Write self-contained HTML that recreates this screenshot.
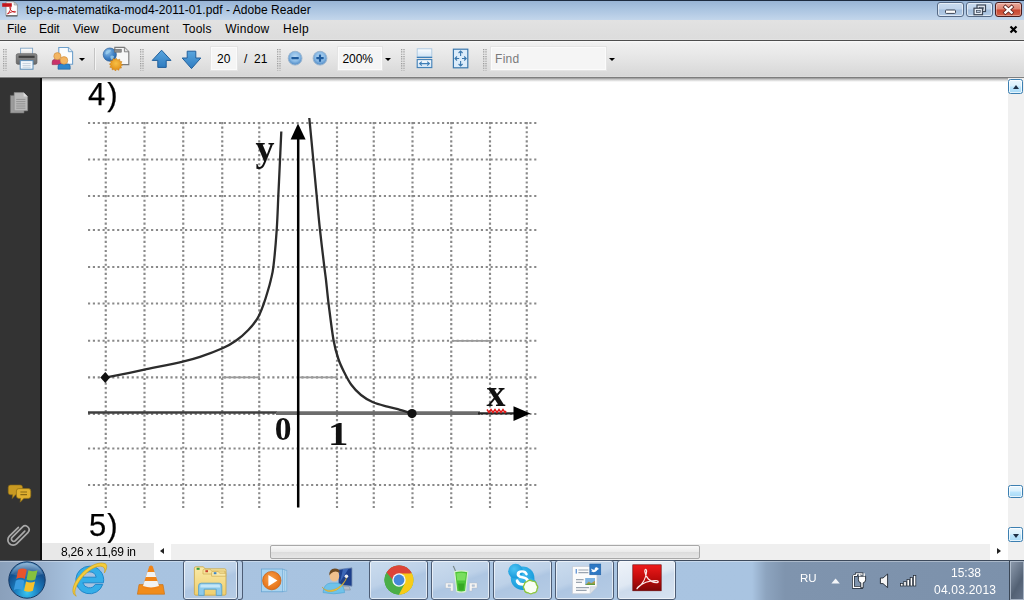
<!DOCTYPE html>
<html><head><meta charset="utf-8"><title>Adobe Reader</title>
<style>
*{box-sizing:border-box;margin:0;padding:0}
html,body{width:1024px;height:600px;overflow:hidden;background:#fff;font-family:"Liberation Sans",sans-serif;font-size:12px;color:#000}
.abs{position:absolute}
#title{left:0;top:0;width:1024px;height:20px;background:linear-gradient(#98b4d5 0,#a9c3e0 40%,#c3d6eb 100%);border-top:1px solid #1c2a3f}
#title .t{left:26px;top:2px;letter-spacing:0.06px;font-size:12px;line-height:14px;white-space:nowrap;color:#000}
#menu{left:0;top:20px;width:1024px;height:20px;background:linear-gradient(#e2e2e2,#dcdcdc)}
#menu span{position:absolute;top:2.4px;line-height:14px;font-size:12px;white-space:nowrap}
#tbline{left:0;top:39px;width:1024px;height:2px;background:linear-gradient(#e6e6e6 0,#e0e0e0 45%,#4c4c4c 55%,#505050 100%)}
#toolbar{left:0;top:41px;width:1024px;height:36px;background:linear-gradient(#fbfbfb 0,#f0f0f0 2px,#e5e5e5 50%,#d7d7d7 97%,#e0e0e0 100%)}
#tbshadow{left:0;top:77px;width:1024px;height:5px;background:linear-gradient(#6a6a6a 0,#9c9c9c 25%,#cfcfcf 55%,#f0f0f0 85%,#fff 100%)}
#side{left:0;top:78px;width:40px;height:482px;background:#333}
#sideb{left:40px;top:78px;width:2px;height:482px;background:#0c0c0c}
#vtrack{left:1008px;top:78px;width:16px;height:482px;background:#f0f0f0}
#status{left:42px;top:543px;width:112px;height:17px;background:#e8e8e8}
#status span{position:absolute;left:19px;top:2px;letter-spacing:-.2px;font-size:12px;line-height:14px;white-space:nowrap}
#htrack{left:171px;top:544px;width:819px;height:16px;background:#efefef}
#taskbar{left:0;top:560px;width:1024px;height:40px;background:linear-gradient(90deg,#8aa0bb 0,#93aac6 30px,#a8c3e0 75px,#a9c4e1 752px,#8da4bf 766px,#7f94ae 785px,#7c91ab 100%);border-top:1px solid #3d4a5c;box-shadow:inset 0 1px 0 rgba(255,255,255,.35)}

.wb{top:1px;width:27px;height:15px;border:1px solid #566a86;border-radius:3px;background:linear-gradient(#c9dbef 0,#bfd3ea 48%,#a3bedd 52%,#b4cce6 100%);box-shadow:inset 0 0 0 1px rgba(255,255,255,.55)}
.wb svg{position:absolute;left:-1px;top:-1px}
.wc{border-color:#4a1c1c;background:linear-gradient(#e9a99b 0,#dd8472 48%,#c8452f 52%,#d2634a 100%);box-shadow:inset 0 0 0 1px rgba(255,255,255,.35)}
.grip{position:absolute;top:8px;width:4px;height:21px;background-image:radial-gradient(circle at 1px 1px,#9a9a9a 0.9px,transparent 1.1px);background-size:2.5px 2.33px}
.tbox{position:absolute;top:6px;height:23px;background:#f5f5f5;border:1px solid #fbfbfb;box-shadow:0 0 0 1px #e4e4e4}
.tbox span,.ttxt{position:absolute;font-size:12px;line-height:14px;white-space:nowrap}
.dd{position:absolute;width:0;height:0;border-left:3px solid transparent;border-right:3px solid transparent;border-top:3.5px solid #000}
.sbtn{position:absolute;border:1px solid #3c7fb1;border-radius:2.5px;background:linear-gradient(#eaf6fd 0,#d9f0fc 48%,#bee6fd 52%,#a7d9f5 100%);box-shadow:inset 0 0 0 1px rgba(255,255,255,.7)}
.sbtn i,i.abs{position:absolute;width:0;height:0;display:block}
.tbtn{position:absolute;top:-1px;height:40px;border:1px solid #4d5d75;border-radius:3px;background:linear-gradient(160deg,#cbdcee 0,#bdd1e8 45%,#aec6e2 55%,#b6cce5 100%);box-shadow:inset 0 0 0 1px rgba(255,255,255,.6)}
.tbtn.act{background:linear-gradient(160deg,#eef3f9 0,#dfe8f3 45%,#cddbec 55%,#d6e2f0 100%)}
.tt{color:#fff;font-size:12px;line-height:14px;white-space:nowrap}
#graph,.doc{will-change:transform}
.doc{font-size:31px;line-height:30px;white-space:nowrap;letter-spacing:2px;-webkit-text-stroke:0.25px #000}
</style></head><body>
<div id="title" class="abs"><span class="abs t">tep-e-matematika-mod4-2011-01.pdf - Adobe Reader</span>
<svg class="abs" style="left:0;top:-1px" width="24" height="19" viewBox="0 0 24 19">
<path d="M6,1.8 h8.2 l3.2,3.2 v10.8 h-11.4z" fill="#fdfdfd" stroke="#8a8a8a" stroke-width="0.8"/>
<path d="M14.2,1.8 v3.2 h3.2z" fill="#d8d8d8" stroke="#8a8a8a" stroke-width="0.6"/>
<path d="M6,15.9 h11.4" stroke="#444" stroke-width="1"/>
<rect x="2.2" y="3.2" width="9.6" height="3.6" fill="#c4161c"/>
<path d="M7.5,14 c2.2,-2.2 3.4,-5 3.2,-6.6 c-0.2,-0.9 -1.1,-0.6 -0.9,0.5 c0.4,2.2 2.6,4.2 5,4.4 c1.1,0.1 1.1,-0.9 0,-0.9 c-2.4,0 -5.2,1.1 -7.3,2.6z" fill="none" stroke="#c4161c" stroke-width="0.9"/>
</svg>
<div class="abs wb" style="left:937px"><svg width="27" height="15" viewBox="0 0 27 15"><rect x="8.5" y="8" width="10" height="3.4" rx="0.8" fill="#fff" stroke="#3c4656" stroke-width="1"/></svg></div>
<div class="abs wb" style="left:966px"><svg width="27" height="15" viewBox="0 0 27 15"><rect x="11" y="3" width="8.5" height="6.5" fill="#e8eef6" stroke="#3c4656" stroke-width="1.2"/><rect x="13.3" y="5.2" width="4" height="2" fill="#b9cbe0" stroke="#3c4656" stroke-width="0.6"/><rect x="8" y="6.2" width="8.5" height="6.5" fill="#e8eef6" stroke="#3c4656" stroke-width="1.2"/><rect x="10.4" y="8.6" width="3.8" height="2" fill="#b9cbe0" stroke="#3c4656" stroke-width="0.7"/></svg></div>
<div class="abs wb wc" style="left:995px"><svg width="27" height="15" viewBox="0 0 27 15"><path d="M10.4,5 L16.6,10.6 M16.6,5 L10.4,10.6" stroke="#5a2320" stroke-width="3.8" stroke-linecap="square"/><path d="M10.4,5 L16.6,10.6 M16.6,5 L10.4,10.6" stroke="#fff" stroke-width="2.3" stroke-linecap="square"/></svg></div>
</div>
<div id="menu" class="abs">
<span style="left:7px">File</span><span style="left:39px">Edit</span><span style="left:73px">View</span><span style="left:112px;letter-spacing:.33px">Document</span><span style="left:182.5px;letter-spacing:.25px">Tools</span><span style="left:225.3px;letter-spacing:.25px">Window</span><span style="left:283px;letter-spacing:.3px">Help</span><svg class="abs" style="left:1009px;top:5px" width="9" height="9" viewBox="0 0 9 9"><path d="M1.5,1.5 L7.5,7.5 M7.5,1.5 L1.5,7.5" stroke="#000" stroke-width="2.2"/></svg>
</div>
<div id="tbline" class="abs"></div>
<div id="toolbar" class="abs">
<svg class="abs" style="left:3px;top:8px" width="4" height="22" viewBox="0 0 4 22"><path d="M0.7,0v21.5M3,0v21.5" stroke="#969696" stroke-width="1.2" stroke-dasharray="1.165 1.165"/></svg>
<svg class="abs" style="left:14px;top:5px" width="26" height="26" viewBox="14 46 26 26">
<defs><linearGradient id="pg" x1="0" y1="0" x2="0" y2="1"><stop offset="0" stop-color="#fff"/><stop offset="1" stop-color="#d6d6d6"/></linearGradient>
<linearGradient id="pb" x1="0" y1="0" x2="0" y2="1"><stop offset="0" stop-color="#8d8d8d"/><stop offset="1" stop-color="#6a6a6a"/></linearGradient></defs>
<rect x="20.6" y="48.2" width="12" height="8" fill="url(#pg)" stroke="#7fa3c4" stroke-width="0.9"/>
<rect x="16.3" y="53.8" width="20.6" height="10.4" rx="1.6" fill="url(#pb)" stroke="#5e5e5e" stroke-width="0.8"/>
<rect x="18.6" y="55.7" width="16" height="2.2" fill="#3e3e3e"/>
<rect x="20.2" y="60.6" width="12.8" height="8.6" fill="#f4f9fd" stroke="#5b8db8" stroke-width="1"/>
<path d="M22.5,63.4h8.2M22.5,65.4h8.2M22.5,67.2h8.2" stroke="#b9c7d3" stroke-width="0.8"/>
</svg>
<svg class="abs" style="left:50px;top:5px" width="26" height="26" viewBox="50 46 26 26">
<path d="M58.8,47.5 h9.6 l4.2,4.2 v12.6 h-13.8z" fill="#fafcfe" stroke="#6d9fcb" stroke-width="1.1"/>
<path d="M68.4,47.5 v4.2 h4.2" fill="#dfeaf5" stroke="#6d9fcb" stroke-width="0.9"/>
<path d="M52.2,64.6 v-2.6 q0,-2.6 2.6,-2.6 h4 q2.6,0 2.6,2.6 v2.6z" fill="#c9326a" stroke="#8e1f48" stroke-width="0.6"/>
<circle cx="57.4" cy="56.2" r="3.6" fill="#f3b562" stroke="#c98a3a" stroke-width="0.6"/>
<path d="M58,69.2 v-2.8 q0,-2.4 2.6,-2.4 h7 q2.6,0 2.6,2.4 v2.8z" fill="#2f86cc" stroke="#1c5d99" stroke-width="0.6"/>
<circle cx="64" cy="60.4" r="3.8" fill="#f3b562" stroke="#c98a3a" stroke-width="0.6"/>
</svg>
<div class="dd" style="left:79px;top:16.5px"></div>
<div class="abs" style="left:94px;top:7px;width:1px;height:22px;background:#c4c4c4;box-shadow:1px 0 0 #f4f4f4"></div>
<svg class="abs" style="left:102px;top:4px" width="30" height="28" viewBox="102 45 30 28">
<defs><radialGradient id="gl" cx="0.35" cy="0.3" r="0.8"><stop offset="0" stop-color="#8fc0ea"/><stop offset="0.6" stop-color="#3d7fc4"/><stop offset="1" stop-color="#285f9f"/></radialGradient>
<radialGradient id="sb" cx="0.5" cy="0.4" r="0.6"><stop offset="0" stop-color="#f7c046"/><stop offset="1" stop-color="#e08a12"/></radialGradient></defs>
<path d="M114.8,47.4 h9.6 l4.4,4.4 v12.8 h-14z" fill="#f7f7f7" stroke="#7a7a7a" stroke-width="1.1"/>
<path d="M124.4,47.4 v4.4 h4.4" fill="#e2e2e2" stroke="#7a7a7a" stroke-width="0.9"/>
<circle cx="109.8" cy="54.6" r="6.6" fill="url(#gl)" stroke="#2a5f9a" stroke-width="0.7"/>
<path d="M106,51.5 q2.5,-2.5 5,-1.2 q-0.5,2.5 -2.6,3 q-1.8,2 -3,0.4z M110.5,56 q2,-1 3.6,0.6 q-0.6,2.6 -2.6,3.2 q-1.6,-1.6 -1,-3.8z" fill="#9ed0ee" opacity="0.8"/>
<rect x="114.4" y="49.2" width="7" height="3" fill="#8c8c8c" stroke="#666" stroke-width="0.5"/>
<path d="M116.4,58 l1.6,2 l2.4,-1 l0.2,2.6 l2.6,0.4 l-1.2,2.4 l2,1.6 l-2.2,1.4 l0.8,2.4 l-2.6,0.2 l-0.6,2.6 l-2.4,-1.2 l-1.8,2 l-1.6,-2.2 l-2.4,0.8 l-0.2,-2.6 l-2.6,-0.6 l1.2,-2.2 l-1.8,-1.8 l2.2,-1.4 l-0.8,-2.4 l2.6,-0.2 l0.6,-2.6 l2.4,1z" transform="translate(116.4 64.6) scale(0.82) translate(-116.4 -65.6)" fill="url(#sb)" stroke="#c87a10" stroke-width="0.6"/>
</svg>
<svg class="abs" style="left:140px;top:8px" width="4" height="22" viewBox="0 0 4 22"><path d="M0.7,0v21.5M3,0v21.5" stroke="#969696" stroke-width="1.2" stroke-dasharray="1.165 1.165"/></svg>
<svg class="abs" style="left:149px;top:6px" width="56" height="24" viewBox="149 47 56 24">
<defs><linearGradient id="ar" x1="0" y1="0" x2="0" y2="1"><stop offset="0" stop-color="#5aa6de"/><stop offset="1" stop-color="#2f7cc0"/></linearGradient></defs>
<path d="M161.6,50.2 L171,60.4 H166.2 V67.4 H157.8 V60.4 H152.2z" fill="url(#ar)" stroke="#215f9b" stroke-width="1" stroke-linejoin="round"/>
<path d="M187.2,51.2 H195.8 V58 H200.8 L191.5,68.6 L182.2,58 H187.2z" fill="url(#ar)" stroke="#215f9b" stroke-width="1" stroke-linejoin="round"/>
</svg>
<div class="tbox" style="left:211px;width:26px"><span style="left:5px;top:3.5px">20</span></div>
<span class="ttxt" style="left:244px;top:10.5px">/</span><span class="ttxt" style="left:254px;top:10.5px">21</span>
<svg class="abs" style="left:277px;top:8px" width="4" height="22" viewBox="0 0 4 22"><path d="M0.7,0v21.5M3,0v21.5" stroke="#969696" stroke-width="1.2" stroke-dasharray="1.165 1.165"/></svg>
<svg class="abs" style="left:286px;top:8px" width="44" height="20" viewBox="286 49 44 20">
<defs><radialGradient id="zb" cx="0.5" cy="0.4" r="0.6"><stop offset="0" stop-color="#b9d9f3"/><stop offset="0.55" stop-color="#8bbbe6"/><stop offset="1" stop-color="#4a86c3"/></radialGradient></defs>
<circle cx="295.1" cy="58.2" r="6.9" fill="url(#zb)" stroke="#9db7d0" stroke-width="1"/>
<rect x="291.4" y="57" width="7.4" height="2.2" rx="0.6" fill="#1f5c9e"/>
<circle cx="320" cy="58.2" r="6.9" fill="url(#zb)" stroke="#9db7d0" stroke-width="1"/>
<rect x="316.3" y="57" width="7.4" height="2.2" rx="0.6" fill="#1f5c9e"/><rect x="318.9" y="54.4" width="2.2" height="7.4" rx="0.6" fill="#1f5c9e"/>
</svg>
<div class="tbox" style="left:338px;width:44px"><span style="left:3.5px;top:3.5px;letter-spacing:-.1px">200%</span></div>
<div class="dd" style="left:384.5px;top:17px"></div>
<svg class="abs" style="left:401px;top:8px" width="4" height="22" viewBox="0 0 4 22"><path d="M0.7,0v21.5M3,0v21.5" stroke="#969696" stroke-width="1.2" stroke-dasharray="1.165 1.165"/></svg>
<svg class="abs" style="left:414px;top:5px" width="60" height="26" viewBox="414 46 60 26">
<defs><linearGradient id="fw" x1="0" y1="0" x2="0" y2="1"><stop offset="0" stop-color="#fafcfe"/><stop offset="1" stop-color="#cfe3f5"/></linearGradient></defs>
<rect x="417.2" y="48.8" width="14.6" height="8.4" fill="url(#fw)" stroke="#a9c6e0" stroke-width="0.9"/>
<path d="M416.8,57.4 h15.4" stroke="#3f7fb7" stroke-width="1.3"/>
<rect x="417.2" y="59.6" width="14.6" height="8" fill="url(#fw)" stroke="#3f7fb7" stroke-width="1.1"/>
<path d="M419.6,63.6 h9.8 M421.8,61.6 l-2.2,2 l2.2,2 M427.2,61.6 l2.2,2 l-2.2,2" stroke="#3f7fb7" stroke-width="1.1" fill="none"/>
<rect x="453.4" y="49.2" width="14.4" height="18.6" fill="#dcecfa" stroke="#3b78ad" stroke-width="1.2"/>
<path d="M460.6,51 v5 M458.6,53 l2,-2 l2,2 M460.6,66 v-5 M458.6,64 l2,2 l2,-2 M455,58.5 h4.2 M457,56.5 l-2,2 l2,2 M466.2,58.5 h-4.2 M464.2,56.5 l2,2 l-2,2" stroke="#3b78ad" stroke-width="1.1" fill="none"/>
</svg>
<svg class="abs" style="left:483px;top:8px" width="4" height="22" viewBox="0 0 4 22"><path d="M0.7,0v21.5M3,0v21.5" stroke="#969696" stroke-width="1.2" stroke-dasharray="1.165 1.165"/></svg>
<div class="tbox" style="left:491px;width:115px"><span style="left:3px;top:3.5px;color:#7a7a7a;letter-spacing:.3px">Find</span></div>
<div class="dd" style="left:608.5px;top:16.5px"></div>
</div>
<div id="tbshadow" class="abs"></div>
<div id="side" class="abs">
<svg class="abs" style="left:0;top:0" width="40" height="482" viewBox="0 78 40 482">
<path d="M10.4,95.4 h9.6 l4,4 v13.6 h-13.6z" fill="#9c9c9c" stroke="#6e6e6e" stroke-width="0.6"/>
<path d="M14.2,92.6 h9.4 l4,4 v14.2 h-13.4z" fill="#b9b9b9" stroke="#8a8a8a" stroke-width="0.6"/>
<path d="M23.6,92.6 v4 h4z" fill="#dcdcdc"/>
<path d="M16.2,99.4h9.2M16.2,101.6h9.2M16.2,103.8h9.2M16.2,106h9.2M16.2,108.2h9.2" stroke="#8e8e8e" stroke-width="0.9"/>
<path d="M10.6,485 h9.6 q2.4,0 2.4,2.4 v5 q0,2.4 -2.4,2.4 h-4.6 l-3.4,3.8 l0.4,-3.8 h-2 q-2.4,0 -2.4,-2.4 v-5 q0,-2.4 2.4,-2.4z" fill="#c99a22" stroke="#8a6a14" stroke-width="0.6"/>
<path d="M18.8,488.6 h9.6 q2.4,0 2.4,2.4 v5 q0,2.4 -2.4,2.4 h-4.6 l-3.6,3.8 l0.4,-3.8 h-1.8 q-2.4,0 -2.4,-2.4 v-5 q0,-2.4 2.4,-2.4z" fill="#e0b030" stroke="#8a6a14" stroke-width="0.7"/>
<path d="M20.4,492h6.6M20.4,494.6h6.6" stroke="#8a6a14" stroke-width="1.1"/>
<path d="M24.8,531.2 L15.4,540.6 a2.3,2.3 0 0 1 -3.3,-3.3 L22.6,526.8 a3.9,3.9 0 0 1 5.5,5.5 L16.8,543.6 a5.2,5.2 0 0 1 -7.4,-7.4 L18.4,527.4" fill="none" stroke="#a9a9a9" stroke-width="1.7" stroke-linecap="round"/>
</svg></div><div id="sideb" class="abs"></div>
<div id="vtrack" class="abs">
<div class="sbtn" style="left:0;top:1px;width:15px;height:15px"><i style="left:3.5px;top:5px;border-left:3.5px solid transparent;border-right:3.5px solid transparent;border-bottom:4px solid #1e2f45"></i></div>
<div class="sbtn" style="left:0;top:407px;width:15px;height:13px"></div>
<div class="sbtn" style="left:0;top:449px;width:15px;height:15px"><i style="left:3.5px;top:5.5px;border-left:3.5px solid transparent;border-right:3.5px solid transparent;border-top:4px solid #1e2f45"></i></div>
</div>
<svg class="abs" id="graph" style="left:0;top:0" width="1024" height="560" viewBox="0 0 1024 560">
<g stroke="#898989" stroke-width="2.15" fill="none">
<line x1="88" y1="123.0" x2="536.5" y2="123.0" stroke-dasharray="2.15 2.7"/>
<line x1="88" y1="159.5" x2="536.5" y2="159.5" stroke-dasharray="2.15 2.7"/>
<line x1="88" y1="196.0" x2="536.5" y2="196.0" stroke-dasharray="2.15 2.7"/>
<line x1="88" y1="230.0" x2="536.5" y2="230.0" stroke-dasharray="2.15 2.7"/>
<line x1="88" y1="267.0" x2="536.5" y2="267.0" stroke-dasharray="2.15 2.7"/>
<line x1="88" y1="303.5" x2="536.5" y2="303.5" stroke-dasharray="2.15 2.7"/>
<line x1="88" y1="340.7" x2="536.5" y2="340.7" stroke-dasharray="2.15 2.7"/>
<line x1="88" y1="377.3" x2="536.5" y2="377.3" stroke-dasharray="2.15 2.7"/>
<line x1="88" y1="448.5" x2="536.5" y2="448.5" stroke-dasharray="2.15 2.7"/>
<line x1="88" y1="485.0" x2="536.5" y2="485.0" stroke-dasharray="2.15 2.7"/>
<line x1="105.75" y1="122" x2="105.75" y2="508" stroke-dasharray="2.15 2.42"/>
<line x1="144.50" y1="122" x2="144.50" y2="508" stroke-dasharray="2.15 2.42"/>
<line x1="183.25" y1="122" x2="183.25" y2="508" stroke-dasharray="2.15 2.42"/>
<line x1="222.25" y1="122" x2="222.25" y2="508" stroke-dasharray="2.15 2.42"/>
<line x1="259.25" y1="122" x2="259.25" y2="508" stroke-dasharray="2.15 2.42"/>
<line x1="337.00" y1="122" x2="337.00" y2="508" stroke-dasharray="2.15 2.42"/>
<line x1="373.75" y1="122" x2="373.75" y2="508" stroke-dasharray="2.15 2.42"/>
<line x1="412.50" y1="122" x2="412.50" y2="508" stroke-dasharray="2.15 2.42"/>
<line x1="451.25" y1="122" x2="451.25" y2="508" stroke-dasharray="2.15 2.42"/>
<line x1="490.00" y1="122" x2="490.00" y2="508" stroke-dasharray="2.15 2.42"/>
<line x1="526.75" y1="122" x2="526.75" y2="508" stroke-dasharray="2.15 2.42"/>
</g>
<path d="M222,377.4H259M299.5,377.4H337" stroke="#9a9a9a" stroke-width="1.8"/>
<line x1="452" y1="340.8" x2="491" y2="340.8" stroke="#9a9a9a" stroke-width="1.8"/>
<line x1="88" y1="414" x2="536.5" y2="414" stroke="#898989" stroke-width="2.15" stroke-dasharray="2.15 2.7"/>
<line x1="88" y1="412.5" x2="277" y2="412.5" stroke="#3e3e3e" stroke-width="2.3"/>
<line x1="276" y1="413.2" x2="480" y2="413.2" stroke="#6c6c6c" stroke-width="3.7"/>
<line x1="478" y1="413.4" x2="516" y2="413.4" stroke="#262626" stroke-width="2.4"/>
<polygon points="530.5,413.6 513.5,406.3 513.5,421" fill="#000"/>
<line x1="298.2" y1="130" x2="298.2" y2="507.5" stroke="#000" stroke-width="2.5"/>
<polygon points="298,123.5 290.6,139.5 305.6,139.5" fill="#000"/>
<path d="M105.1,377.7 C111.6,376.4 131.4,372.4 144.3,369.7 C157.2,367.0 173.5,363.7 182.8,361.6 C192.1,359.5 193.4,359.1 200.0,356.9 C206.6,354.7 216.5,351.0 222.5,348.3 C228.5,345.6 231.5,343.9 235.8,340.8 C240.1,337.8 244.7,333.8 248.3,330.0 C251.9,326.2 255.0,322.5 257.5,318.3 C260.0,314.1 261.6,309.6 263.3,305.0 C265.0,300.4 266.6,295.2 267.8,291.0 C269.1,286.8 269.9,284.1 270.8,280.0 C271.7,275.9 272.4,275.0 273.4,266.7 C274.4,258.4 275.9,241.8 276.7,230.0 C277.5,218.2 277.8,207.7 278.3,196.0 C278.9,184.3 279.5,170.8 280.0,160.0 C280.5,149.2 281.1,136.2 281.3,131.5" stroke="#2c2c2c" stroke-width="2.3" fill="none"/>
<path d="M309.3,118.0 C310.0,125.0 312.1,147.0 313.3,160.0 C314.5,173.0 315.6,184.3 316.7,196.0 C317.8,207.7 318.7,218.2 320.0,230.0 C321.3,241.8 323.3,258.4 324.3,266.7 C325.3,275.0 325.3,273.8 326.0,280.0 C326.7,286.2 327.4,294.0 328.6,304.0 C329.9,314.0 331.9,330.8 333.5,340.0 C335.1,349.2 336.5,353.5 338.4,359.0 C340.2,364.5 342.4,368.7 344.6,373.0 C346.8,377.3 348.8,381.3 351.5,385.0 C354.2,388.7 357.4,392.1 361.0,395.0 C364.6,397.9 368.6,400.4 373.0,402.3 C377.4,404.2 383.0,405.4 387.5,406.6 C392.0,407.9 396.0,408.7 400.0,409.8 C404.0,410.9 409.6,412.7 411.5,413.3" stroke="#2c2c2c" stroke-width="2.3" fill="none"/>
<polygon points="105.3,372 110,377.6 105.3,383 100.3,377.6" fill="#111"/>
<circle cx="412" cy="413.6" r="4.6" fill="#111"/>
<g font-family="'Liberation Serif',serif" font-weight="bold" fill="#111">
<text x="255.5" y="160.5" font-size="38">y</text>
<text x="486.5" y="406" font-size="38">x</text>
<text x="274.8" y="440.4" font-size="33.5">0</text>
<text x="329.8" y="444.8" font-size="34" transform="translate(338.5 0) scale(1.2 1) translate(-338.5 0)">1</text>
</g>
<path d="M487,409.5 l2,3 l2,-3 l2,3 l2,-3 l2,3 l2,-3 l2,3 l2,-3 l2,3 l1,-1.5" stroke="#e01818" stroke-width="1.5" fill="none"/>
</svg>
<div class="abs doc" style="left:87.8px;top:80.3px">4)</div>
<div class="abs doc" style="left:88.6px;top:510.5px;letter-spacing:1px">5)</div>
<div id="status" class="abs"><span>8,26 x 11,69 in</span></div>
<i class="abs" style="left:160px;top:548px;border-top:3.5px solid transparent;border-bottom:3.5px solid transparent;border-right:4px solid #222"></i>
<div id="htrack" class="abs"><div class="abs" style="left:99px;top:1px;width:430px;height:14px;border:1px solid #a8a8a8;border-radius:2px;background:linear-gradient(#f8f8f8,#eaeaea 50%,#dcdcdc 52%,#e6e6e6)"></div></div>
<i class="abs" style="left:997px;top:548px;border-top:3.5px solid transparent;border-bottom:3.5px solid transparent;border-left:4px solid #222"></i>
<div id="taskbar" class="abs">
<div class="tbtn" style="left:183px;width:55px"></div><div class="abs" style="left:238px;top:-1px;width:5px;height:40px;border:1px solid #4d5d75;border-left:none;border-radius:0 3px 3px 0;background:#b9cee6"></div>
<div class="tbtn" style="left:369px;width:59px"></div>
<div class="tbtn" style="left:431px;width:59px"></div>
<div class="tbtn" style="left:493px;width:59px"></div>
<div class="tbtn" style="left:555px;width:59px"></div>
<div class="tbtn act" style="left:617px;width:59px"></div>
<svg class="abs" style="left:0;top:0" width="1024" height="39" viewBox="0 561 1024 39">
<defs>
<radialGradient id="orb" cx="0.5" cy="0.85" r="0.9"><stop offset="0" stop-color="#39c5f0"/><stop offset="0.35" stop-color="#1b7fc0"/><stop offset="0.7" stop-color="#134e8c"/><stop offset="1" stop-color="#5a9ed0"/></radialGradient>
<linearGradient id="orbh" x1="0" y1="0" x2="0" y2="1"><stop offset="0" stop-color="#fff" stop-opacity="0.75"/><stop offset="1" stop-color="#fff" stop-opacity="0.1"/></linearGradient>
<linearGradient id="fold" x1="0" y1="0" x2="0" y2="1"><stop offset="0" stop-color="#f9e9a8"/><stop offset="1" stop-color="#efcf6e"/></linearGradient>
<linearGradient id="acr" x1="0" y1="0" x2="0" y2="1"><stop offset="0" stop-color="#ee1a1a"/><stop offset="0.5" stop-color="#c20c0c"/><stop offset="1" stop-color="#7e0606"/></linearGradient>
<radialGradient id="wmp" cx="0.45" cy="0.4" r="0.65"><stop offset="0" stop-color="#f9a24a"/><stop offset="1" stop-color="#e26a10"/></radialGradient>
<radialGradient id="sky" cx="0.4" cy="0.35" r="0.75"><stop offset="0" stop-color="#4cc3f4"/><stop offset="1" stop-color="#0e93d6"/></radialGradient>
</defs>
<!-- start orb -->
<circle cx="27" cy="580" r="18.2" fill="url(#orb)" stroke="#163a66" stroke-width="1"/>
<path d="M11,574 a17,17 0 0 1 32,0 q-16,6 -32,0z" fill="url(#orbh)" opacity="0.55"/>
<g transform="translate(27 580) scale(1.22) translate(-26.2 -580)"><path d="M19,571.5 q3.5,-2 7,0 l-1.6,7.6 q-3.5,-1.8 -7,0z" fill="#e8542c"/>
<path d="M27.4,572 q3.6,1.8 7.4,0 l-1.8,7.6 q-3.6,1.8 -7.2,0z" fill="#86c13e"/>
<path d="M17,580.6 q3.5,-2 7,0 l-1.6,7.6 q-3.5,-1.8 -7,0z" fill="#3b9ce0"/>
<path d="M25.4,581.2 q3.6,1.8 7.4,0 l-1.8,7.6 q-3.6,1.8 -7.2,0z" fill="#f6c12c"/></g>
<!-- IE -->
<g transform="translate(89.6 580) scale(1.17) translate(-89.6 -580)"><path d="M89.6,568.2 a11.8,11.8 0 1 0 11.2,15.6 h-6.4 a5.8,5.8 0 0 1 -10.6,-1.4 h17.6 a11.8,11.8 0 0 0 -11.8,-14.2z M83.8,577.6 a5.8,5.6 0 0 1 11.4,0z" fill="#35aee8" stroke="#1c84c8" stroke-width="0.8" fill-rule="evenodd"/>
<path d="M103.2,566.2 c-6.5,-2.8 -18,3.5 -24.6,13.6 c-4.4,7 -4.2,12.6 -0.4,14 c-2.4,-2.6 -1,-7.4 2.6,-12.8 c5.8,-8.6 15.2,-14.6 20,-12.4 c2,0.9 2.2,3.2 1.4,5.4 c2,-3.2 2.8,-6.6 1,-7.8z" fill="#f4cc3c" stroke="#cda11c" stroke-width="0.6"/></g>
<!-- VLC -->
<path d="M139,584.6 h24 l1.6,9.6 h-27.2z" fill="#f08c1c" stroke="#c96c0c" stroke-width="0.6"/>
<path d="M149.2,566.4 q1.8,-1.6 3.6,0 l6.8,21.2 q-8.6,4 -17.2,0z" fill="#f08418"/>
<path d="M147.4,572 h7.2 l1.6,5 h-10.4z M144.6,581 h12.8 l1.6,5 q-8,2.8 -16,0z" fill="#f2f2f2"/>
<!-- Explorer -->
<path d="M194.4,568.2 q0,-1.4 1.4,-1.4 h7.6 l1.6,2 h19.6 q1.4,0 1.4,1.4 v23.6 q0,1.4 -1.4,1.4 h-28.8 q-1.4,0 -1.4,-1.4z" fill="url(#fold)" stroke="#c9a545" stroke-width="0.8"/>
<path d="M203,570.4 q0,-1.2 1.2,-1.2 h6 l1.4,1.8 h13.4 v3 h-22z" fill="#f6e29a" stroke="#c9a545" stroke-width="0.6"/>
<path d="M211.6,572.6 q0,-1.2 1.2,-1.2 h5.4 l1.4,1.8 h6.2 v3 h-14.2z" fill="#f8e8a8" stroke="#c9a545" stroke-width="0.6"/>
<rect x="196.6" y="567.8" width="3" height="2" fill="#2f9a3a"/><rect x="205.4" y="570.2" width="2.6" height="2" fill="#c8402c"/><rect x="213.8" y="572.2" width="2.6" height="2" fill="#3b84c8"/>
<path d="M198.6,595.4 v-9.6 q0,-2.6 2.6,-2.6 h18 q2.6,0 2.6,2.6 v9.6 h-5.6 v-6.2 h-12 v6.2z" fill="#8ccaec" stroke="#4f9ccc" stroke-width="0.8"/>
<path d="M200.4,586 q0,-1.4 1.6,-1.4 h16.6 q1.4,0 1.4,1.4 v1.4 h-19.6z" fill="#c4e6f8"/>
<!-- WMP -->
<rect x="265.4" y="570.2" width="21.4" height="21" fill="#b9ddf4" stroke="#78b0d8" stroke-width="0.7"/>
<rect x="263.4" y="569.6" width="21.4" height="21.8" fill="#c4e2f6" stroke="#78b0d8" stroke-width="0.7"/>
<rect x="261.4" y="569" width="21.4" height="22.8" fill="#a9d4f0" stroke="#6aa6d2" stroke-width="0.8"/>
<circle cx="271.8" cy="580.6" r="9.2" fill="url(#wmp)" stroke="#c85c0c" stroke-width="0.7"/>
<path d="M268.4,575 l9,5.6 l-9,5.6z" fill="#fff"/>
<!-- user + monitor -->
<path d="M338.6,569.4 l13.4,-1.6 v18.4 l-13.4,-1.4z" fill="#1d3f8c" stroke="#7f95b4" stroke-width="0.8"/>
<path d="M343,569 l6,-1 l-9,14z" fill="#4a78c8" opacity="0.7"/>
<path d="M341,586.4 h8 l1.4,3.6 h-10.8z" fill="#b4bcc6" stroke="#7f8a98" stroke-width="0.5"/>
<ellipse cx="334.4" cy="576" rx="4.8" ry="5.6" fill="#f0c08c"/>
<path d="M329.4,575.6 q-0.6,-6.6 5.4,-7 q5,0 5,4.4 q-3.4,-2.4 -6.6,-1 q-2.6,1.2 -3.8,3.6z" fill="#6e4a22"/>
<path d="M323,592.6 q0.6,-8.6 7.4,-9.6 h7.6 q6,1.4 6.6,9.6 q-10.8,2.4 -21.6,0z" fill="#6fc2ea" stroke="#3f9ccc" stroke-width="0.5"/>
<path d="M322,587 q4,5 12,2.6 q8.6,-3 13.4,-13.6 q-2.6,9 -10.6,14 q-9.6,4.6 -14.8,-3z" fill="#f0c43c" stroke="#c89a1c" stroke-width="0.4"/>
<circle cx="346.4" cy="576.2" r="1.8" fill="#fff" opacity="0.9"/>
<!-- Chrome -->
<circle cx="399" cy="580" r="14.4" fill="#4aae48"/>
<path d="M399,580 L386.53,572.8 A14.4,14.4 0 0 1 411.47,572.8z" fill="#dc4437"/>
<path d="M399,580 L411.47,572.8 A14.4,14.4 0 0 1 399,594.4z" fill="#f7cb18"/>
<path d="M399,580 L386.53,572.8 A14.4,14.4 0 0 0 399,594.4z" fill="#4aae48"/>
<path d="M399,573.4 h12.8 a14.4,14.4 0 0 0 -25.2,-0.8 l6.4,7.4z" fill="#dc4437"/>
<path d="M404.8,583.4 l-5.8,11 a14.4,14.4 0 0 0 12.8,-21 h-12.8z" fill="#f7cb18"/>
<path d="M393.2,583.4 l-6.6,-10.8 a14.4,14.4 0 0 0 12.4,21.8 l5.8,-11z" fill="#4aae48"/>
<circle cx="399" cy="580" r="6.7" fill="#f4f8fb"/>
<circle cx="399" cy="580" r="5.4" fill="#4688d8"/>
<!-- QIP -->
<path d="M454,567.4 l1.6,4 M453.2,566 l0.8,1.4" stroke="#7a8a8a" stroke-width="1.2"/>
<path d="M454.6,571.8 q6.6,-2 13.2,0 l-2.2,19.6 q-4.4,1.6 -8.8,0z" fill="#4cc436" stroke="#d8f0d0" stroke-width="1.2"/>
<path d="M456.4,573.4 q4.8,-1.2 9.6,0 l-0.8,7 h-8z" fill="#7ade5e"/>
<path d="M458,583.4 h6.4 l-0.8,7 h-4.8z" fill="#38a824"/>
<path d="M445.6,583 h7.6 v8 h-2.6 v-3 h-5z M448,584.8 v1.6 h2.6 v-1.6z" fill="#f4f4f4" stroke="#b0b8c0" stroke-width="0.4" fill-rule="evenodd"/>
<path d="M469.4,583 h7.6 v5 h-5 v3 h-2.6z M472,584.8 v1.6 h2.6 v-1.6z" fill="#f4f4f4" stroke="#b0b8c0" stroke-width="0.4" fill-rule="evenodd"/>
<!-- Skype -->
<g fill="url(#sky)"><circle cx="522.6" cy="578.2" r="11.8"/><circle cx="515.6" cy="571.2" r="7.4"/><circle cx="529.6" cy="585.2" r="7.4"/></g>
<path d="M527.6,573.6 q-1.200,-3.400 -5.600,-3.400 q-5.400,0 -5.400,4 q0,3 4.400,4 l3,0.800 q2,0.600 2,2 q0,2 -3.400,2 q-3,0 -4,-2.600 q-0.800,-1.600 -2.200,-0.800 q-1.200,0.800 -0.400,2.600 q1.600,3.600 6.800,3.600 q6.200,0 6.200,-4.800 q0,-3.200 -4.600,-4.400 l-3,-0.800 q-1.800,-0.400 -1.800,-1.600 q0,-1.600 2.600,-1.600 q2.200,0 3,1.800 q0.800,1.600 2,0.900 q1,-0.600 0.400,-1.700z" fill="#fff"/>
<path d="M527,581.600 q2.600,-2.400 5.400,-0.400 q3.600,-0.200 4,3.200 q2.400,2.200 0.600,4.800 q0,3.400 -3.600,3.600 q-2.600,2 -5.200,0 q-3.600,0 -3.800,-3.400 q-2,-2.600 0,-5 q0.200,-2.600 2.600,-2.800z" fill="#fafff4" stroke="#8cc63c" stroke-width="1.3"/>
<!-- doc -->
<path d="M572.400,566.400 h24.600 v20.400 l-6.800,7 h-17.800z" fill="#fbfbfb" stroke="#c4ccd6" stroke-width="0.8"/>
<path d="M597,586.800 h-6.800 v7z" fill="#dfe3e8" stroke="#c4ccd6" stroke-width="0.6"/>
<rect x="575.600" y="569" width="1.400" height="4.600" fill="#6a9ad8"/>
<path d="M578.400,570h10M578.400,572.600h10M576,579.600h7.600M576,582.400h6M576,587.600h13M576,590.400h10.600" stroke="#9aa4b0" stroke-width="1.1"/>
<rect x="585.200" y="578" width="9.800" height="7" fill="#7fb4e0"/><path d="M585.200,585 l3.600,-3.600 l2.400,1.800 l3.800,-2.400 v4.200z" fill="#b09a4c"/><path d="M585.200,585 l3,-1.600 l6.800,0.400 v1.200z" fill="#5c9c3c"/>
<rect x="589.800" y="564" width="11" height="10.800" fill="#2d78c4" stroke="#1f5ea0" stroke-width="0.5"/>
<path d="M592,571.800 q3.600,1.200 5.600,-2 l1.800,-1 l-1.400,-0.400 q-0.800,-1.800 -2.600,-0.800 q-1,0.800 -0.600,2 q-1.800,0.400 -3.400,-1.200 q-0.600,1.600 1,2.600 q-0.600,0.400 -1.400,0.200 q0.600,0.800 1.800,0.800 q-0.400,0 -0.800,-0.200z" fill="#fff"/>
<!-- Adobe -->
<rect x="632.800" y="564.800" width="28.400" height="26" fill="url(#acr)" stroke="#6a0404" stroke-width="0.6"/>
<path d="M637.600,588 c5,-3.600 8.600,-10.400 9,-16.600 c0.100,-2.600 -2,-2.600 -1.800,0 c0.500,5.800 5.200,10.800 11.400,11.200 c2.800,0.200 2.800,-1.800 0,-2 c-6.600,-0.300 -13.800,2.600 -18,6.400 c-1.800,1.800 -1.400,2.400 -0.600,1z" fill="none" stroke="#fbeaea" stroke-width="1.200"/>
<!-- tray -->
<path d="M831.400,583.600 l4.200,-5 l4.200,5z" fill="#f4f6f9"/>
<path d="M853.400,575.400 h3 v-1.600 h5.600 v1.600 M853.400,575.400 v12 h8.200 v-2" fill="none" stroke="#1e2630" stroke-width="2.600"/>
<path d="M853.400,575.400 h3 v-1.600 h5.600 v1.600 M853.400,575.400 v12 h8.200 v-2" fill="none" stroke="#fff" stroke-width="1.200"/>
<path d="M858.400,576.200 h7.200 v3.600 q0,2.600 -2.400,3 v5 h-2.400 v-5 q-2.400,-0.400 -2.400,-3z M859.800,573.400 v3 M864.200,573.400 v3" fill="#fff" stroke="#1e2630" stroke-width="0.900"/>
<path d="M859.800,573.200 v3 M864.200,573.200 v3" stroke="#fff" stroke-width="1.400"/>
<path d="M880.400,578 h2.600 l4.600,-4 v13.600 l-4.600,-4 h-2.600z" fill="#f4f4f4" stroke="#1e2630" stroke-width="0.900"/>
<g fill="#fff" stroke="#1e2630" stroke-width="0.700"><rect x="900.600" y="583.400" width="2.400" height="2.600"/><rect x="903.800" y="581.600" width="2.400" height="4.400"/><rect x="907" y="579.600" width="2.400" height="6.400"/><rect x="910.200" y="577.600" width="2.400" height="8.400"/><rect x="913.400" y="575.400" width="2.400" height="10.600"/></g>
</svg>
<span class="abs tt" style="left:800px;top:10px;font-size:11.500px">RU</span>
<span class="abs tt" style="left:951px;top:5px">15:38</span>
<span class="abs tt" style="left:934px;top:22px;letter-spacing:.22px">04.03.2013</span>
<div class="abs" style="left:1009px;top:0;width:15px;height:39px;border-left:1px solid #3a4656;background:linear-gradient(120deg,#8f9cae 0,#6d7b8e 35%,#536174 60%,#66748a 100%);box-shadow:inset 0 0 0 1px rgba(190,202,216,.75)"></div>
</div>
</body></html>
